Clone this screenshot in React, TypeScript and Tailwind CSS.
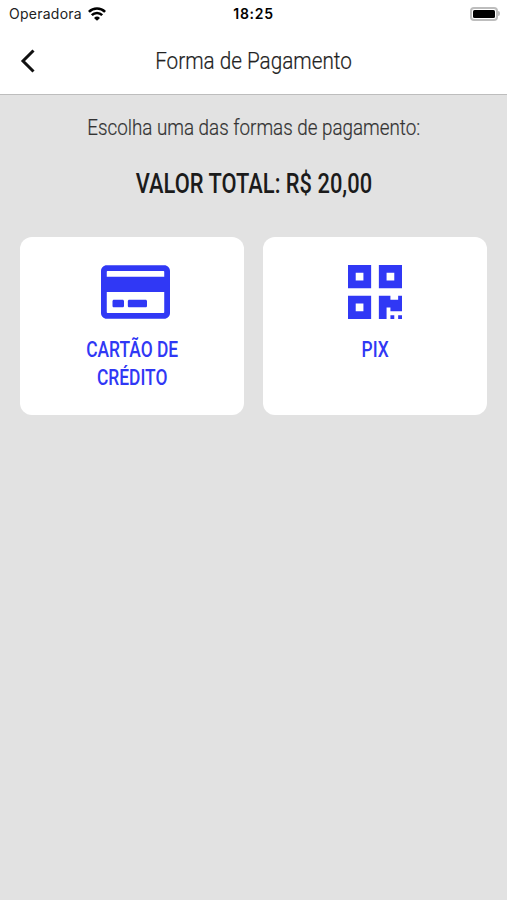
import type { ReactNode } from "react"
import { FaQrcode, FaRegCreditCard } from "react-icons/fa"

function StatusBar() {
  return (
    <div className="grid h-[27px] grid-cols-3 items-center px-[9px] font-['Inter','Liberation_Sans',sans-serif] text-black">
      <div className="flex items-center gap-1.5">
        <span className="inline-block text-[14px] tracking-[0.25px] text-[#222]">Operadora</span>
        <svg width="18" height="14" viewBox="0 0 18 14" fill="none" stroke="currentColor" strokeWidth="2.6">
          <path d="M0.9 4.9a11.5 11.5 0 0 1 16.2 0" />
          <path d="M3.8 8.2a7.4 7.4 0 0 1 10.4 0" />
          <path d="M9 13.8L6 10.9a4.3 4.3 0 0 1 6 0z" fill="currentColor" stroke="none" />
        </svg>
      </div>
      <span className="text-center text-[14px] font-semibold tracking-[0.7px]">18:25</span>
      <div className="-mr-[2px] flex items-center justify-end">
        <div className="h-[14px] w-[28px] rounded-[4px] border-2 border-[#bdbdbd] p-px">
          <div className="h-full rounded-[1.5px] bg-black" />
        </div>
        <div className="h-[5px] w-[2px] rounded-r-full bg-[#bdbdbd]" />
      </div>
    </div>
  )
}

function Header() {
  return (
    <header className="grid h-[68px] grid-cols-[60px_1fr_60px] items-center border-b border-[#bdbdbd] bg-white">
      <button aria-label="Voltar" className="pl-5">
        <svg width="16" height="24" viewBox="0 0 16 24" fill="none" stroke="#111" strokeWidth="3">
          <path d="M13.5 1.5L3 12l10.5 10.5" />
        </svg>
      </button>
      <h1 className="origin-center scale-x-[0.863] text-center text-[24px] font-light whitespace-nowrap text-[#222] [-webkit-text-stroke:0.2px]">
        Forma de Pagamento
      </h1>
    </header>
  )
}

function PaymentOption({ icon, children }: { icon: ReactNode; children: ReactNode }) {
  return (
    <button className="flex h-[178px] flex-col items-center rounded-xl bg-white pt-[24px] text-[#3038f5]">
      {icon}
      <span className="mt-[13px] scale-x-[0.79] text-[22px] leading-7 font-medium whitespace-nowrap">
        {children}
      </span>
    </button>
  )
}

export default function App() {
  return (
    <div className="min-h-screen bg-[#e2e2e2] font-['Roboto','Liberation_Sans',sans-serif]">
      <div className="bg-white">
        <StatusBar />
        <Header />
      </div>
      <main className="px-5 text-center">
        <p className="pt-[17px] text-[22px] leading-8 font-light whitespace-nowrap text-[#333] [-webkit-text-stroke:0.2px]">
          <span className="inline-block scale-x-[0.855]">Escolha uma das formas de pagamento:</span>
        </p>
        <p className="mt-[22px] text-[27px] leading-9 font-medium whitespace-nowrap text-[#1b1b1b]">
          <span className="inline-block scale-x-[0.81]">VALOR TOTAL: R$ 20,00</span>
        </p>
        <div className="mt-[35px] grid grid-cols-2 gap-[19px]">
          <PaymentOption icon={<FaRegCreditCard className="ml-[7px] h-[62px] w-[69px]" />}>
            CARTÃO DE
            <br />
            CRÉDITO
          </PaymentOption>
          <PaymentOption icon={<FaQrcode className="h-[62px] w-[54px]" />}>PIX</PaymentOption>
        </div>
      </main>
    </div>
  )
}
